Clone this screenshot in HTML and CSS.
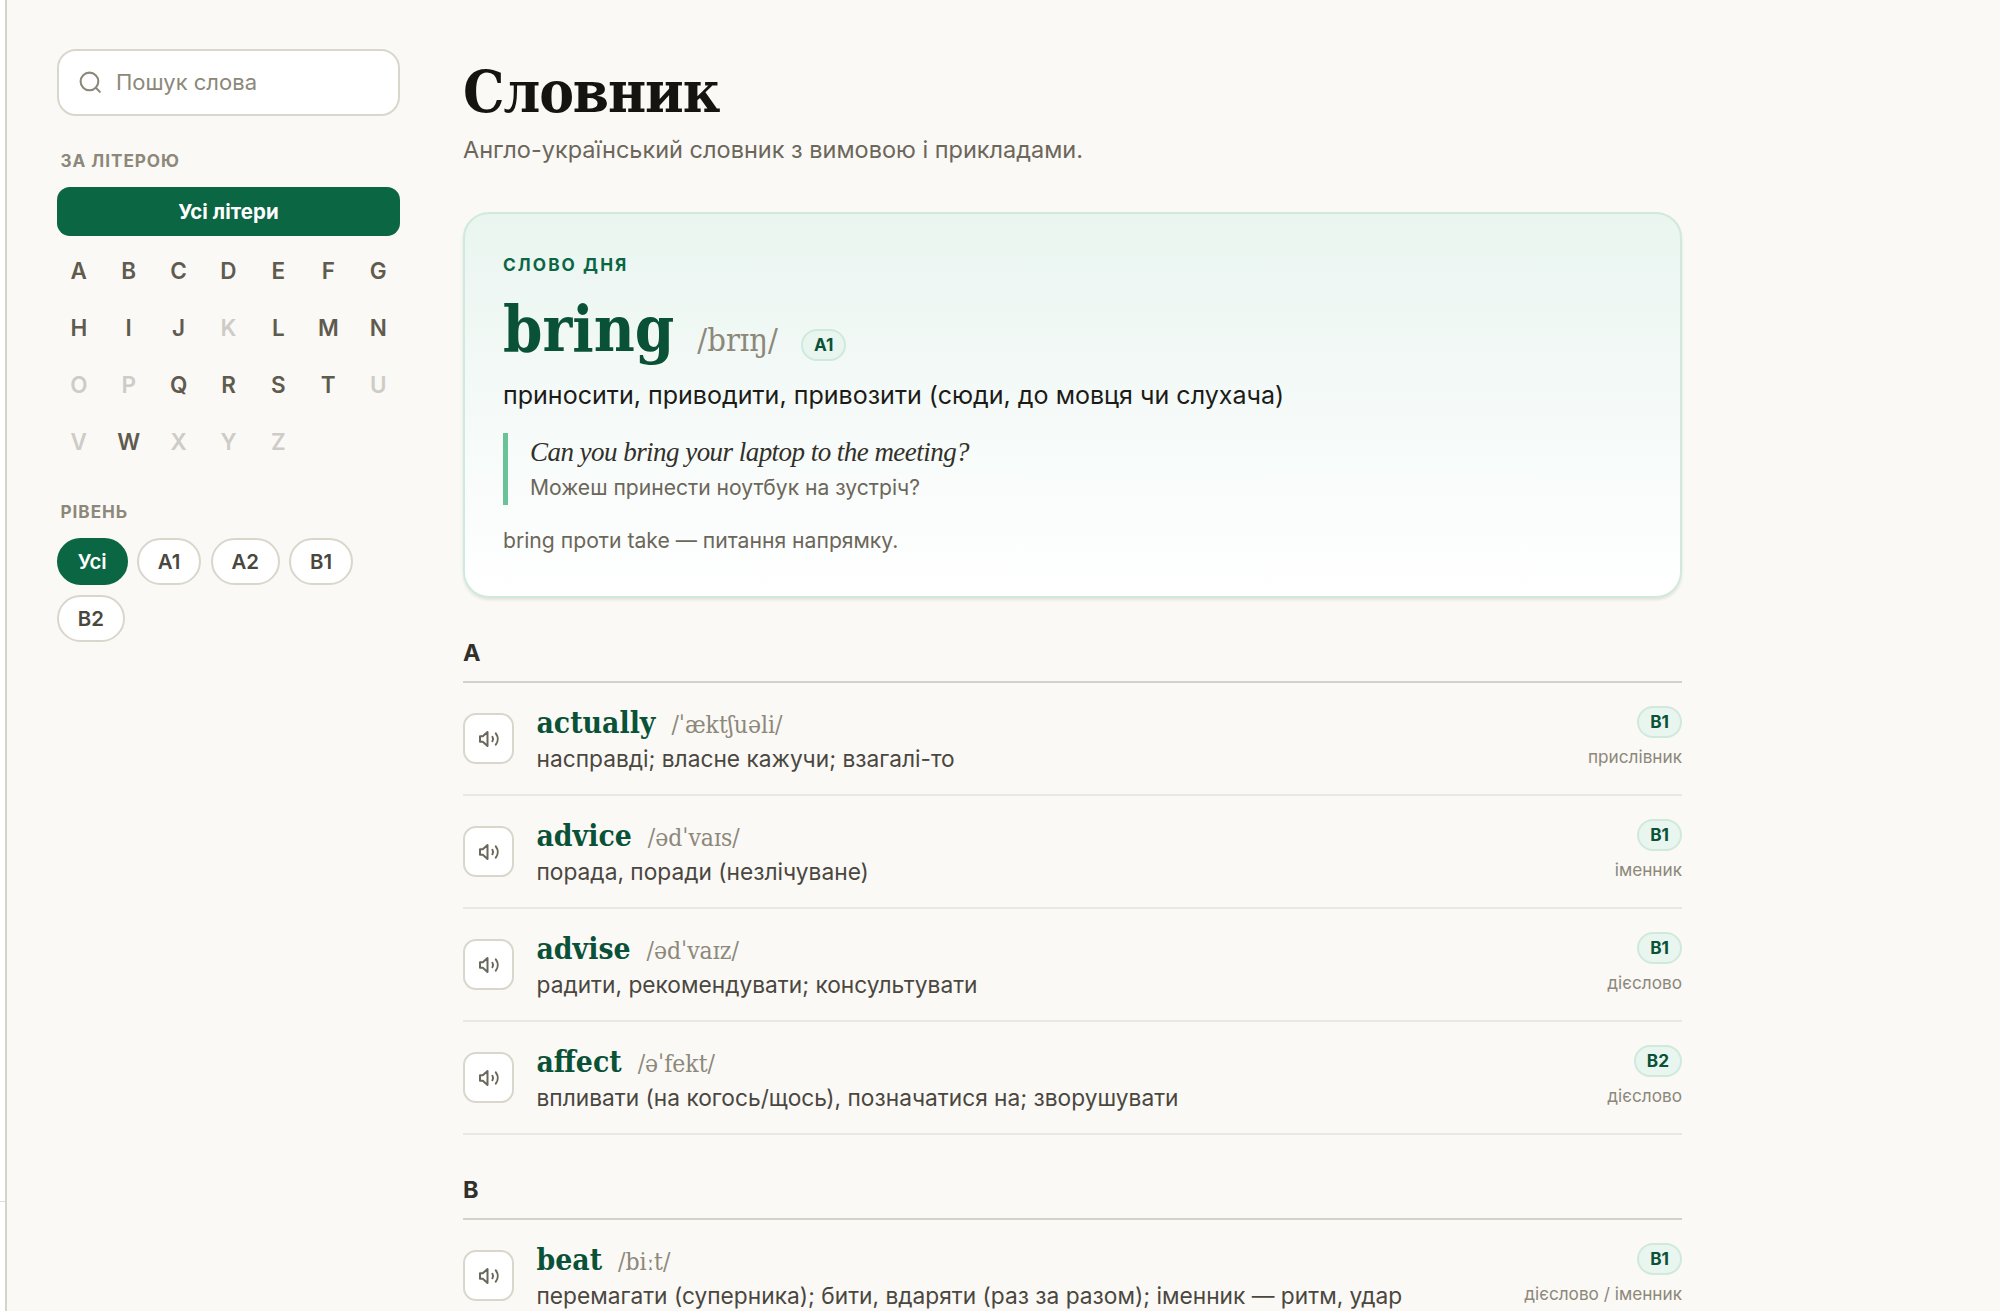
FILE: index.html
```html
<!DOCTYPE html>
<html lang="uk">
<head>
    <meta charset="UTF-8">
    <meta name="viewport" content="width=device-width, initial-scale=1.0">
    <title>Словник</title>
    <link rel="stylesheet" href="styles.css">
</head>
<body>

    <svg class="sprite" width="0" height="0">
        <symbol id="icon-volume" viewBox="0 0 24 24">
            <path d="M3 9.200v5.600h2.800L10.500 19V5L5.800 9.200z"/>
            <path d="M15.400 9.800a4 4 0 0 1 0 4.400"/>
            <path d="M18.800 6.300a9.500 9.500 0 0 1 0 11.400"/>
        </symbol>
    </svg>

    <div class="rail"><div class="rail-footer"></div></div>

    <aside class="sidebar">
        <label class="search">
            <svg class="search-icon" viewBox="0 0 24 24"><circle cx="11" cy="11" r="8.500"/><path d="m21 21-3.900-3.900"/></svg>
            <input type="text" placeholder="Пошук слова">
        </label>

        <h2 class="filter-title">За літерою</h2>
        <button class="all-letters">Усі літери</button>
        <div class="letters">
            <button>A</button><button>B</button><button>C</button><button>D</button><button>E</button><button>F</button><button>G</button>
            <button>H</button><button>I</button><button>J</button><button disabled>K</button><button>L</button><button>M</button><button>N</button>
            <button disabled>O</button><button disabled>P</button><button>Q</button><button>R</button><button>S</button><button>T</button><button disabled>U</button>
            <button disabled>V</button><button>W</button><button disabled>X</button><button disabled>Y</button><button disabled>Z</button>
        </div>

        <h2 class="filter-title level-title">Рівень</h2>
        <div class="levels">
            <button class="chip active">Усі</button>
            <button class="chip">A1</button>
            <button class="chip">A2</button>
            <button class="chip">B1</button>
            <button class="chip">B2</button>
        </div>
    </aside>

    <main class="content">
        <h1>Словник</h1>
        <p class="subtitle">Англо-український словник з вимовою і прикладами.</p>

        <section class="word-card">
            <div class="card-label">Слово дня</div>
            <div class="card-head">
                <span class="card-word">bring</span>
                <span class="card-ipa">/brɪŋ/</span>
                <span class="badge">A1</span>
            </div>
            <p class="card-meaning">приносити, приводити, привозити (сюди, до мовця чи слухача)</p>
            <blockquote class="example">
                <p class="example-en">Can you bring your laptop to the meeting?</p>
                <p class="example-uk">Можеш принести ноутбук на зустріч?</p>
            </blockquote>
            <p class="card-note">bring проти take — питання напрямку.</p>
        </section>

        <section class="group">
            <h2 class="group-title">A</h2>
            <div class="entry">
                <button class="play"><svg><use href="#icon-volume"/></svg></button>
                <div class="entry-text">
                    <div class="entry-head"><span class="word">actually</span><span class="ipa">/ˈæktʃuəli/</span></div>
                    <div class="meaning">насправді; власне кажучи; взагалі-то</div>
                </div>
                <div class="entry-meta"><span class="badge">B1</span><span class="pos">прислівник</span></div>
            </div>
            <div class="entry">
                <button class="play"><svg><use href="#icon-volume"/></svg></button>
                <div class="entry-text">
                    <div class="entry-head"><span class="word">advice</span><span class="ipa">/ədˈvaɪs/</span></div>
                    <div class="meaning">порада, поради (незлічуване)</div>
                </div>
                <div class="entry-meta"><span class="badge">B1</span><span class="pos">іменник</span></div>
            </div>
            <div class="entry">
                <button class="play"><svg><use href="#icon-volume"/></svg></button>
                <div class="entry-text">
                    <div class="entry-head"><span class="word">advise</span><span class="ipa">/ədˈvaɪz/</span></div>
                    <div class="meaning">радити, рекомендувати; консультувати</div>
                </div>
                <div class="entry-meta"><span class="badge">B1</span><span class="pos">дієслово</span></div>
            </div>
            <div class="entry">
                <button class="play"><svg><use href="#icon-volume"/></svg></button>
                <div class="entry-text">
                    <div class="entry-head"><span class="word">affect</span><span class="ipa">/əˈfekt/</span></div>
                    <div class="meaning">впливати (на когось/щось), позначатися на; зворушувати</div>
                </div>
                <div class="entry-meta"><span class="badge">B2</span><span class="pos">дієслово</span></div>
            </div>
        </section>

        <section class="group">
            <h2 class="group-title">B</h2>
            <div class="entry">
                <button class="play"><svg><use href="#icon-volume"/></svg></button>
                <div class="entry-text">
                    <div class="entry-head"><span class="word">beat</span><span class="ipa">/biːt/</span></div>
                    <div class="meaning">перемагати (суперника); бити, вдаряти (раз за разом); іменник — ритм, удар</div>
                </div>
                <div class="entry-meta"><span class="badge">B1</span><span class="pos">дієслово / іменник</span></div>
            </div>
        </section>
    </main>

</body>
</html>
```
FILE: styles.css
```css
:root {
    --sans: Inter, "Liberation Sans", sans-serif;
    --serif: "DejaVu Serif Condensed", "DejaVu Serif", serif;
    --green: #0b6644;
    --green-dark: #0a5237;
    --border: #d9d7cc;
    --muted: #8c887a;
}

* {
    box-sizing: border-box;
}

body {
    margin: 0;
    height: 1311px;
    display: flex;
    overflow: hidden;
    background: #fbf9f6;
    font-family: var(--sans);
    color: #1c1b18;
}

h1, h2, p, blockquote {
    margin: 0;
}

button, input {
    font-family: inherit;
    padding: 0;
    border: none;
    background: none;
}

.sprite {
    position: absolute;
}

/* Edge of the collapsed navigation */
.rail {
    flex: none;
    width: 7px;
    display: flex;
    flex-direction: column;
    justify-content: flex-end;
    background: #fff;
    border-right: 2px solid #d5d4ca;
}

.rail-footer {
    height: 110px;
    border-top: 1px solid #deddd5;
}

/* Sidebar */
.sidebar {
    flex: none;
    width: 343px;
    margin-left: 50px;
    padding-top: 49px;
}

.search {
    display: flex;
    align-items: center;
    height: 67px;
    padding: 0 19px;
    gap: 13px;
    background: #fff;
    border: 2px solid var(--border);
    border-radius: 19px;
}

.search-icon {
    flex: none;
    width: 25px;
    height: 25px;
    fill: none;
    stroke: var(--muted);
    stroke-width: 2;
    stroke-linecap: round;
}

.search input {
    width: 100%;
    padding-bottom: 1px;
    font-size: 22px;
    outline: none;
}

.search input::placeholder {
    color: var(--muted);
    opacity: 1;
}

.filter-title {
    margin: 31px 0 13px 3.5px;
    font-size: 17.2px;
    line-height: 27px;
    font-weight: 700;
    letter-spacing: 0.95px;
    text-transform: uppercase;
    color: var(--muted);
}

.all-letters {
    display: block;
    width: 100%;
    height: 49px;
    padding-bottom: 1px;
    border-radius: 13px;
    background: var(--green);
    color: #fff;
    font-size: 20.4px;
    font-weight: 700;
    letter-spacing: 0.1px;
}

.letters {
    display: grid;
    grid-template-columns: repeat(7, 1fr);
    gap: 7px 6.3px;
    margin-top: 10px;
}

.letters button {
    height: 50px;
    padding-bottom: 1px;
    font-size: 22.5px;
    font-weight: 600;
    color: #5f5b4f;
}

.letters button:disabled {
    color: #cdccc7;
}

.level-title {
    margin-top: 31px;
    margin-bottom: 13px;
}

.levels {
    display: flex;
    flex-wrap: wrap;
    gap: 9.5px;
}

.chip {
    height: 47px;
    padding: 0 18.8px;
    border: 2px solid var(--border);
    border-radius: 24px;
    background: #fff;
    color: #4a473f;
    font-size: 20.4px;
    font-weight: 600;
}

.chip.active {
    background: var(--green);
    border-color: var(--green);
    color: #fff;
}

/* Main column */
.content {
    flex: none;
    width: 1219px;
    margin-left: 63px;
    padding-top: 59px;
}

h1 {
    margin-bottom: 7px;
    font-family: var(--serif);
    font-size: 58px;
    line-height: 66px;
    letter-spacing: -1.1px;
    color: #16140f;
}

.subtitle {
    font-size: 23.5px;
    line-height: 35px;
    color: #6b675a;
}

.word-card {
    margin-top: 45px;
    padding: 38px;
    border: 2px solid #cfe9dd;
    border-radius: 26px;
    background: linear-gradient(#eaf5f0, #fff);
    box-shadow: 0 2px 3px rgba(40, 30, 10, 0.1);
}

.card-label {
    font-size: 17.2px;
    line-height: 26px;
    font-weight: 700;
    letter-spacing: 2.1px;
    text-transform: uppercase;
    color: var(--green);
}

.card-head {
    display: flex;
    align-items: baseline;
    height: 74px;
    margin-top: 14px;
}

.card-word {
    font-family: var(--serif);
    font-size: 62.8px;
    line-height: 74px;
    font-weight: 700;
    color: var(--green-dark);
}

.card-ipa {
    margin: 0 23px 0 23px;
    font-family: var(--serif);
    font-size: 32.5px;
    color: var(--muted);
}

.badge {
    display: inline-block;
    height: 32px;
    padding: 0 11px;
    border: 2px solid #cfe9dd;
    border-radius: 16px;
    background: #e9f5ef;
    color: var(--green-dark);
    font-size: 17.2px;
    line-height: 28px;
    font-weight: 700;
}

.card-meaning {
    margin-top: 10px;
    font-size: 25.05px;
    line-height: 38px;
}

.example {
    margin-top: 19px;
    padding-left: 22px;
    border-left: 5px solid #6bc298;
}

.example-en {
    font-family: "Liberation Serif", serif;
    font-style: italic;
    font-size: 27px;
    line-height: 38px;
    letter-spacing: -0.54px;
    color: #32302a;
}

.example-uk {
    font-size: 21.1px;
    line-height: 34px;
    color: #6b675a;
}

.card-note {
    margin-top: 19px;
    font-size: 21.15px;
    line-height: 34px;
    color: #6b675a;
}

/* Word list */
.group-title {
    margin-top: 38px;
    padding-bottom: 11px;
    border-bottom: 2px solid #d3d2c8;
    font-size: 23.5px;
    line-height: 34px;
    font-weight: 700;
    color: #32302a;
}

.entry {
    display: flex;
    align-items: center;
    height: 113px;
    border-bottom: 2px solid #e9e8e2;
}

.play {
    flex: none;
    display: flex;
    align-items: center;
    justify-content: center;
    width: 51px;
    height: 51px;
    margin-right: 22.5px;
    border: 2px solid var(--border);
    border-radius: 13px;
    background: #fff;
}

.play svg {
    width: 24px;
    height: 24px;
    fill: none;
    stroke: #6b675a;
    stroke-width: 2;
    stroke-linecap: round;
    stroke-linejoin: round;
}

.entry-text {
    flex: 1;
}

.entry-head {
    display: flex;
    align-items: baseline;
    height: 40px;
}

.word {
    font-family: var(--serif);
    font-size: 29.8px;
    line-height: 40px;
    font-weight: 700;
    color: var(--green-dark);
}

.ipa {
    margin-left: 16px;
    font-family: var(--serif);
    font-size: 24.5px;
    color: var(--muted);
}

.meaning {
    font-size: 22.72px;
    line-height: 32px;
    color: #4a473f;
}

.entry-meta {
    display: flex;
    flex-direction: column;
    align-items: flex-end;
    gap: 6px;
    padding-bottom: 1px;
}

.pos {
    font-size: 17.2px;
    line-height: 26px;
    color: var(--muted);
}
```
